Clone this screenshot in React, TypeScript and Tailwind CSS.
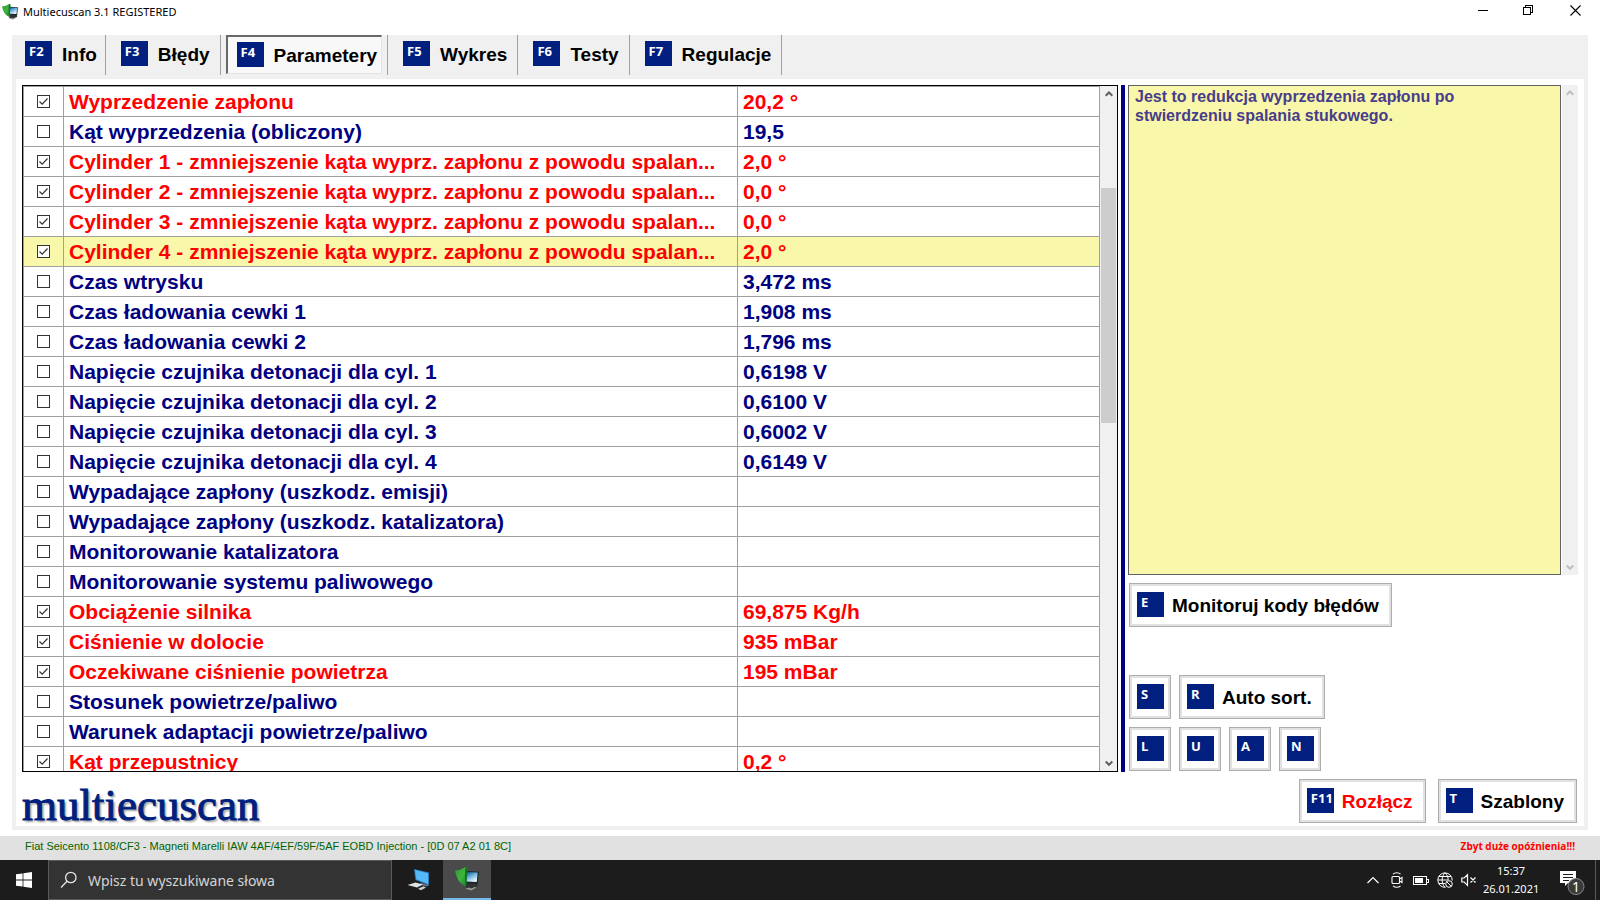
import { useState, type ReactNode } from 'react';
import clsx from 'clsx';

interface Param {
  name: string;
  value: string;
  checked?: boolean;
}

const PARAMS: Param[] = [
  { name: 'Wyprzedzenie zapłonu', value: '20,2 °', checked: true },
  { name: 'Kąt wyprzedzenia (obliczony)', value: '19,5' },
  { name: 'Cylinder 1 - zmniejszenie kąta wyprz. zapłonu z powodu spalan...', value: '2,0 °', checked: true },
  { name: 'Cylinder 2 - zmniejszenie kąta wyprz. zapłonu z powodu spalan...', value: '0,0 °', checked: true },
  { name: 'Cylinder 3 - zmniejszenie kąta wyprz. zapłonu z powodu spalan...', value: '0,0 °', checked: true },
  { name: 'Cylinder 4 - zmniejszenie kąta wyprz. zapłonu z powodu spalan...', value: '2,0 °', checked: true },
  { name: 'Czas wtrysku', value: '3,472 ms' },
  { name: 'Czas ładowania cewki 1', value: '1,908 ms' },
  { name: 'Czas ładowania cewki 2', value: '1,796 ms' },
  { name: 'Napięcie czujnika detonacji dla cyl. 1', value: '0,6198 V' },
  { name: 'Napięcie czujnika detonacji dla cyl. 2', value: '0,6100 V' },
  { name: 'Napięcie czujnika detonacji dla cyl. 3', value: '0,6002 V' },
  { name: 'Napięcie czujnika detonacji dla cyl. 4', value: '0,6149 V' },
  { name: 'Wypadające zapłony (uszkodz. emisji)', value: '' },
  { name: 'Wypadające zapłony (uszkodz. katalizatora)', value: '' },
  { name: 'Monitorowanie katalizatora', value: '' },
  { name: 'Monitorowanie systemu paliwowego', value: '' },
  { name: 'Obciążenie silnika', value: '69,875 Kg/h', checked: true },
  { name: 'Ciśnienie w dolocie', value: '935 mBar', checked: true },
  { name: 'Oczekiwane ciśnienie powietrza', value: '195 mBar', checked: true },
  { name: 'Stosunek powietrze/paliwo', value: '' },
  { name: 'Warunek adaptacji powietrze/paliwo', value: '' },
  { name: 'Kąt przepustnicy', value: '0,2 °', checked: true },
];

const TABS = [
  { key: 'F2', label: 'Info' },
  { key: 'F3', label: 'Błędy' },
  { key: 'F4', label: 'Parametery' },
  { key: 'F5', label: 'Wykres' },
  { key: 'F6', label: 'Testy' },
  { key: 'F7', label: 'Regulacje' },
];

const KeyCap = ({ children }: { children: ReactNode }) => (
  <span className="block h-[25px] w-[27px] shrink-0 bg-[#001f7f] pl-1 text-left font-['Open_Sans',sans-serif] text-[13px] leading-5 font-bold text-white">
    {children}
  </span>
);

const KeyButton = ({
  keyName,
  label,
  danger,
}: {
  keyName: string;
  label?: string;
  danger?: boolean;
}) => (
  <button
    type="button"
    aria-label={label ?? keyName}
    className={clsx(
      'flex h-11 items-start border border-[#adadad] bg-white pt-2 pl-[7px] whitespace-nowrap shadow-[inset_0_0_0_2px_#e1e1e1]',
      label ? 'pr-3' : 'pr-[6px]',
      danger ? 'text-[#ff0000]' : 'text-black',
    )}
  >
    <KeyCap>{keyName}</KeyCap>
    {label && <span className="pl-2 text-[19px] leading-7 font-bold">{label}</span>}
  </button>
);

const ScrollArrow = ({ down, faded }: { down?: boolean; faded?: boolean }) => (
  <svg width="16" height="16" viewBox="0 0 16 16" fill="none" aria-hidden="true">
    <path
      d={down ? 'M4.7 6.5 8 9.8l3.3-3.3' : 'M4.7 9.8 8 6.5l3.3 3.3'}
      stroke={faded ? '#bfbfbf' : '#606060'}
      strokeWidth="2"
    />
  </svg>
);

const AppIcon = ({ size }: { size: number }) => (
  <svg width={size} height={size} viewBox="0 0 24 24" aria-hidden="true">
    <defs>
      <linearGradient id="shield" x1="0" y1="0" x2="1" y2="1">
        <stop offset="0" stopColor="#2f9a35" />
        <stop offset="0.5" stopColor="#3fb53c" />
        <stop offset="1" stopColor="#0f7a22" />
      </linearGradient>
      <linearGradient id="screen" x1="0" y1="0" x2="0.6" y2="1">
        <stop offset="0" stopColor="#0b4a86" />
        <stop offset="0.5" stopColor="#6db4e0" />
        <stop offset="1" stopColor="#eef8fd" />
      </linearGradient>
    </defs>
    <path d="M11 16l11-.5.8 3.500-5 3-6.800-1z" fill="#2e3234" />
    <path d="M10 22l4-1.500 2.500 1 3.500-1.800 1.200 1-5 2.800-2.500-1z" fill="#9a9a90" />
    <path d="M11 4l12.800.8-1 12L10 16z" fill="#1b2226" />
    <path d="M12 5l10.600.6-.8 9.400-10.600-.4z" fill="url(#screen)" />
    <path d="M0 3.500C3.500 3.700 7 2 10.500 0l2.300 1.200c-1.500 5-1 11-1.800 18.800C9.500 18 6.500 17.500 4 14 1.500 10.500 1 7 0 3.500z" fill="url(#shield)" />
    <path d="M10.500 0l2.300 1.200c-1.500 5-1 11-1.800 18.800-1-5-1.500-13-.5-20z" fill="#0e7022" />
  </svg>
);

const TitleBar = () => (
  <header className="flex h-[35px] items-start justify-between">
    <div className="flex h-6 items-center gap-[5px] pl-[2px] font-['Noto_Sans',sans-serif] text-[11px] text-black">
      <AppIcon size={16} />
      <span>Multiecuscan 3.1 REGISTERED</span>
    </div>
    <div className="flex">
      <button type="button" aria-label="Minimalizuj" className="flex h-5 w-[45px] items-center justify-center">
        <svg width="10" height="10" viewBox="0 0 10 10" shapeRendering="crispEdges">
          <path d="M0 5.500h10" stroke="#000" />
        </svg>
      </button>
      <button type="button" aria-label="Przywróć" className="flex h-5 w-[45px] items-center justify-center">
        <svg width="10" height="10" viewBox="0 0 10 10" fill="none" shapeRendering="crispEdges">
          <path d="M.5 2.500h7v7h-7zM2.500 2.500v-2h7v7h-2" stroke="#000" />
        </svg>
      </button>
      <button type="button" aria-label="Zamknij" className="flex h-5 w-[50px] items-center justify-center">
        <svg width="11" height="11" viewBox="0 0 11 11">
          <path d="M.5.5l10 10M10.500.5l-10 10" stroke="#000" strokeWidth="1.100" />
        </svg>
      </button>
    </div>
  </header>
);

const Toolbar = () => (
  <nav className="flex h-11 bg-[#f0f0f0]">
    {TABS.map((tab) =>
      tab.key === 'F4' ? (
        <div key={tab.key} className="h-10 border-r border-[#a0a0a0] px-[5px]">
          <button
            type="button"
            aria-pressed="true"
            className="flex h-[39px] items-start border-t-2 border-r border-b border-l-2 border-[#696969] border-r-[#e3e3e3] border-b-[#e3e3e3] bg-[#f8f8f8] pt-[5px] pr-1 pl-[9px]"
          >
            <KeyCap>{tab.key}</KeyCap>
            <span className="pl-[10px] text-[19px] leading-7 font-bold">{tab.label}</span>
          </button>
        </div>
      ) : (
        <button
          key={tab.key}
          type="button"
          className={clsx(
            'flex h-10 items-start border-r border-[#a0a0a0] pt-[6px]',
            tab.key === 'F2' ? 'pr-2 pl-[13px]' : 'pr-[10px] pl-[15px]',
          )}
        >
          <KeyCap>{tab.key}</KeyCap>
          <span className="pl-[10px] text-[19px] leading-7 font-bold">{tab.label}</span>
        </button>
      ),
    )}
  </nav>
);

const ParamTable = () => {
  const [checked, setChecked] = useState(PARAMS.map((p) => !!p.checked));
  const selected = 5;

  const toggle = (idx: number) =>
    setChecked((prev) => prev.map((c, i) => (i === idx ? !c : c)));

  return (
    <div className="flex h-[687px] min-w-0 flex-1 overflow-hidden border border-black">
      <div className="min-w-0 flex-1 overflow-hidden border-t border-l border-[#a0a0a0]">
        <table className="w-full table-fixed border-separate border-spacing-0 text-[21px] leading-7 font-bold">
          <colgroup>
            <col className="w-10" />
            <col />
            <col className="w-[362px]" />
          </colgroup>
          <tbody>
            {PARAMS.map((param, idx) => (
              <tr
                key={param.name}
                className={clsx(
                  'h-[30px]',
                  idx === selected && 'bg-[#f9f7a9]',
                  param.checked ? 'text-[#ff0000]' : 'text-[#000080]',
                )}
              >
                <td className="border-r border-b border-[#a0a0a0] p-0">
                  <label className="flex h-[29px] items-center justify-center">
                    <input
                      type="checkbox"
                      aria-label={param.name}
                      checked={checked[idx]}
                      onChange={() => toggle(idx)}
                      className="peer h-[13px] w-[13px] appearance-none border border-[#333333] bg-white"
                    />
                    <svg
                      width="13"
                      height="13"
                      viewBox="0 0 13 13"
                      fill="none"
                      className="pointer-events-none absolute hidden peer-checked:block"
                    >
                      <path d="M2.500 6.500l2.700 2.700 5.300-5.700" stroke="#333" strokeWidth="1.200" />
                    </svg>
                  </label>
                </td>
                <td className="truncate border-r border-b border-[#a0a0a0] pt-px pr-[6px] pb-0 pl-[5px]">{param.name}</td>
                <td className="truncate border-r border-b border-[#a0a0a0] pt-px pr-[6px] pb-0 pl-[5px]">{param.value}</td>
              </tr>
            ))}
          </tbody>
        </table>
      </div>
      <div className="flex w-[17px] flex-col items-center bg-[#f0f0f0]">
        <ScrollArrow />
        <div className="mt-[86px] h-[235px] w-[15px] bg-[#cdcdcd]" />
        <div className="mt-auto">
          <ScrollArrow down />
        </div>
      </div>
    </div>
  );
};

const SidePanel = () => (
  <aside className="flex w-[450px] shrink-0 flex-col">
    <div className="flex h-[490px]">
      <p className="flex-1 border border-[#606060] bg-[#f9f7a9] px-[6px] pt-px text-base leading-[19px] font-bold text-[#483d8b]">
        Jest to redukcja wyprzedzenia zapłonu po
        <br />
        stwierdzeniu spalania stukowego.
      </p>
      <div className="ml-px flex w-4 flex-col justify-between bg-[#f0f0f0]">
        <ScrollArrow faded />
        <ScrollArrow down faded />
      </div>
    </div>
    <div className="flex flex-1 flex-col pt-2 pb-px pl-px">
      <div className="flex">
        <KeyButton keyName="E" label="Monitoruj kody błędów" />
      </div>
      <div className="mt-auto flex gap-2">
        <KeyButton keyName="S" />
        <KeyButton keyName="R" label="Auto sort." />
      </div>
      <div className="mt-2 flex gap-2">
        <KeyButton keyName="L" />
        <KeyButton keyName="U" />
        <KeyButton keyName="A" />
        <KeyButton keyName="N" />
      </div>
    </div>
  </aside>
);

const Taskbar = () => (
  <footer className="flex h-10 items-stretch bg-[#1c1c1c] font-['Noto_Sans',sans-serif] text-white">
    <button type="button" aria-label="Start" className="flex w-12 items-center justify-center">
      <svg width="16" height="16" viewBox="0 0 16 16" fill="#fff">
        <path d="M0 2.300l6.600-.9v6.200H0zM7.400 1.300L16 0v7.600H7.400zM0 8.400h6.600v6.200L0 13.700zM7.400 8.400H16V16l-8.600-1.200z" />
      </svg>
    </button>
    <div className="flex w-[344px] items-center border border-[#5a5a5a] bg-[#333333] pl-[11px]">
      <svg width="18" height="18" viewBox="0 0 18 18" fill="none" stroke="#e6e6e6" strokeWidth="1.300">
        <circle cx="10.800" cy="6.500" r="5.200" />
        <path d="M7 10.300L1 16.500" />
      </svg>
      <input
        type="text"
        aria-label="Wyszukaj"
        placeholder="Wpisz tu wyszukiwane słowa"
        className="min-w-0 flex-1 bg-transparent pt-px pl-[10px] text-sm text-white outline-none placeholder:text-[#d4d4d4]"
      />
    </div>
    <button type="button" aria-label="Komputer" className="ml-[3px] flex w-12 items-center justify-center">
      <svg width="24" height="24" viewBox="0 0 24 24">
        <path d="M7 1l15 3.500V17.500L8.500 12z" fill="#2b7fc0" />
        <path d="M8 2l13 3.200v10.800L9.300 11.200z" fill="#55b9f7" />
        <path d="M14 15l7.500 2.200-1.500 1.300-8-2z" fill="#6f7c84" />
        <path d="M0.500 17l8-2.500 7.500 2-6 3z" fill="#dce3e7" />
        <path d="M11 20.800l5.500-2.600 2.500 1.200-5 2.800z" fill="#c9d0d4" />
      </svg>
    </button>
    <button
      type="button"
      aria-label="Multiecuscan"
      className="flex w-12 items-center justify-center border-b-2 border-[#76b9ed] bg-[#4a4a4a]"
    >
      <AppIcon size={24} />
    </button>
    <div className="ml-auto flex items-center">
      <div className="flex items-center gap-2">
        <svg width="16" height="16" viewBox="0 0 16 16" fill="none" stroke="#fff" strokeWidth="1.200">
          <path d="M2.500 11L8 5.500l5.500 5.500" />
        </svg>
        <svg width="16" height="16" viewBox="0 0 16 16" fill="none" stroke="#fff" strokeWidth="1.100">
          <rect x="3" y="4.500" width="7.500" height="7" rx="1" />
          <path d="M10.500 7l2.500-1.600v5.200L10.500 9M4 2.200C6 .3 9.500.3 11.500 2.200M4 13.800c2 1.900 5.500 1.900 7.500 0" />
        </svg>
        <svg width="16" height="16" viewBox="0 0 16 16" fill="none" shapeRendering="crispEdges">
          <path d="M.5 4.500h13v8H.5zM14 7h1.500v3H14" stroke="#fff" />
          <path d="M2 6h8v5H2z" fill="#fff" />
        </svg>
        <svg width="16" height="16" viewBox="0 0 16 16" fill="none" stroke="#fff">
          <path d="M8.500 15.300A7.200 7.200 0 1 1 15.200 8.500M8 .8C4.200 4 4.200 12 8 15.200M8 .8c2.300 2 3.200 4.500 3.200 7.200M.8 8h10M1.800 4.500h12.400M1.800 11.500h6" />
          <circle cx="12" cy="12" r="3.300" />
          <path d="M9.700 9.700l4.600 4.600" />
        </svg>
        <svg width="16" height="16" viewBox="0 0 16 16" fill="none" stroke="#fff" strokeWidth="1.200">
          <path d="M.8 6h2.400l3.300-3.300v10.600L3.200 10H.8zM9.500 5.500l5 5M14.500 5.500l-5 5" />
        </svg>
      </div>
      <div className="ml-[6px] w-[56px] text-center text-[11px] leading-[18px] whitespace-nowrap">
        <div>15:37</div>
        <div>26.01.2021</div>
      </div>
      <button type="button" aria-label="Powiadomienia" className="relative ml-[21px] h-10 w-[35px]">
        <svg width="28" height="28" viewBox="0 0 28 28" className="mt-2">
          <path d="M0 1h16v12H8l-3 3v-3H0z" fill="#fff" />
          <path d="M3 4.500h10M3 7.500h10M3 10.500h6" stroke="#1c1c1c" />
          <circle cx="16" cy="16.500" r="8" fill="#3a3a3a" stroke="#8a8a8a" />
        </svg>
        <span className="absolute top-[18px] left-[12px] text-sm leading-[18px]">1</span>
      </button>
      <div className="h-10 w-[5px] border-l border-[#5a5a5a]" />
    </div>
  </footer>
);

const App = () => (
  <div className="flex min-h-screen flex-col bg-white font-['Liberation_Sans',Arial,sans-serif] text-black">
    <TitleBar />
    <div className="mx-3 flex flex-1 flex-col">
      <Toolbar />
      <main className="flex flex-1 flex-col border-4 border-t-0 border-[#f0f0f0] px-[6px] pt-[6px]">
        <div className="flex">
          <ParamTable />
          <div className="mx-[3px] w-1 bg-[#000080]" />
          <SidePanel />
        </div>
        <div className="flex items-start justify-between pt-[7px] pr-px">
          <h1 className="h-11 font-['Liberation_Serif',serif] text-[45px] leading-[52px] text-[#001f7f] [-webkit-text-stroke:1px_#001f7f] [text-shadow:2px_2px_2px_#9a9a9a]">
            multiecuscan
          </h1>
          <div className="flex gap-3">
            <KeyButton keyName="F11" label="Rozłącz" danger />
            <KeyButton keyName="T" label="Szablony" />
          </div>
        </div>
      </main>
    </div>
    <div className="mt-[6px] flex h-6 justify-between bg-[#e1e1e1] px-[25px] pt-[2px] text-[11px] leading-4">
      <span className="text-[#006400]">
        Fiat Seicento 1108/CF3 - Magneti Marelli IAW 4AF/4EF/59F/5AF EOBD Injection - [0D 07 A2 01 8C]
      </span>
      <span className="font-['Open_Sans',sans-serif] text-[10px] font-bold text-[#ff0000]">Zbyt duże opóźnienia!!!</span>
    </div>
    <Taskbar />
  </div>
);

export default App;
